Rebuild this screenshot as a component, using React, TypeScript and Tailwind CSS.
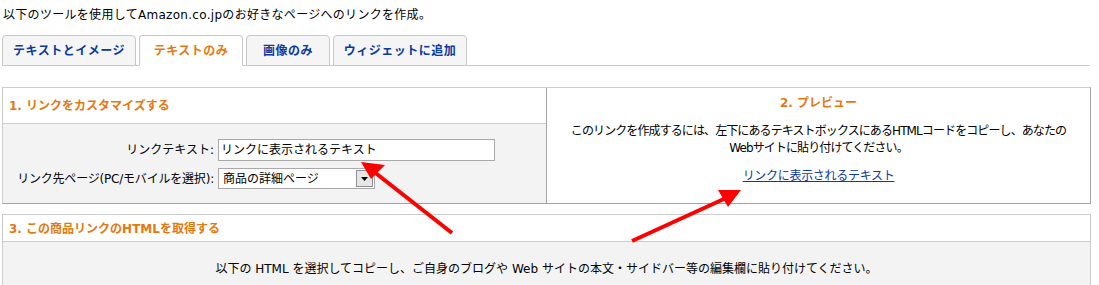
import React from 'react';

const font = { fontFamily: '"DejaVu Sans", "Noto Sans CJK JP", sans-serif' };

const tabs = [
    { label: 'テキストとイメージ', width: 'w-[134px]', active: false },
    { label: 'テキストのみ', width: 'w-[104px]', active: true },
    { label: '画像のみ', width: 'w-[84px]', active: false },
    { label: 'ウィジェットに追加', width: 'w-[134px]', active: false },
];

const App: React.FC = () => {
    return (
        <div className="relative w-[1099px] h-[285px] overflow-hidden bg-white text-[12px] text-black" style={font}>
            {/* Intro */}
            <p className="pl-[3px] pt-[8px] leading-[14px] tracking-[0.3px]">
                以下のツールを使用してAmazon.co.jpのお好きなページへのリンクを作成。
            </p>

            {/* Tabs */}
            <div className="ml-[2px] mt-[14px] w-[1088px] flex gap-[3px] border-b border-[#c8c8c8] h-[30px] items-end">
                {tabs.map((t) => (
                    <div
                        key={t.label}
                        className={`${t.width} h-[31px] -mb-px flex items-center justify-center rounded-t-[4px] border border-[#c8c8c8] font-bold tracking-[0.5px] ${
                            t.active ? 'bg-white text-[#e47911] border-b-white' : 'bg-[#f5f5f5] text-[#0c3a9c]'
                        }`}
                    >
                        {t.label}
                    </div>
                ))}
            </div>

            {/* Section 1 & 2 */}
            <div className="ml-[2px] mt-[21px] w-[1089px] h-[117px] flex border-t border-l border-[#cccccc] border-b border-r border-b-[#a3a3a3] border-r-[#a3a3a3]">
                <div className="w-[544px] flex flex-col border-r border-[#a3a3a3]">
                    <div className="h-[36px] flex items-center pl-[6px] font-bold text-[#e47911] border-b border-[#cccccc]">
                        1. リンクをカスタマイズする
                    </div>
                    <div className="flex-1 bg-[#f3f3f3] pt-[15px]">
                        <div className="flex items-center h-[22px]">
                            <span className="w-[215px] text-right pr-[4px]">リンクテキスト:</span>
                            <div className="w-[277px] h-[22px] bg-white border border-[#a9a9a9] flex items-center pl-[2px]">
                                リンクに表示されるテキスト
                            </div>
                        </div>
                        <div className="flex items-center h-[21px] mt-[7px]">
                            <span className="w-[215px] text-right pr-[4px] whitespace-nowrap tracking-[-0.2px]">
                                リンク先ページ(PC/モバイルを選択):
                            </span>
                            <div className="w-[157px] h-[21px] bg-white border border-[#a9a9a9] flex items-center justify-between pl-[4px]">
                                <span>商品の詳細ページ</span>
                                <span className="w-[17px] h-[17px] mr-px bg-[#e6e6e6] border border-[#8f8f8f] flex items-center justify-center">
                                    <svg width="7" height="4" viewBox="0 0 7 4">
                                        <path d="M0 0h7L3.5 4z" fill="#000" />
                                    </svg>
                                </span>
                            </div>
                        </div>
                    </div>
                </div>
                <div className="flex-1 flex flex-col items-center text-center">
                    <div className="h-[24px] flex items-end font-bold text-[#e47911]">2. プレビュー</div>
                    <p className="mt-[11px] leading-[17px] whitespace-nowrap tracking-[-0.9px]">
                        このリンクを作成するには、左下にあるテキストボックスにあるHTMLコードをコピーし、あなたの
                        <br />
                        Webサイトに貼り付けてください。
                    </p>
                    <a href="#" className="mt-[12px] text-[#0c3a9c] underline leading-[14px] tracking-[-0.3px]">
                        リンクに表示されるテキスト
                    </a>
                </div>
            </div>

            {/* Section 3 */}
            <div className="ml-[2px] mt-[10px] w-[1089px] border-t border-l border-r border-[#cccccc]">
                <div className="h-[27px] flex items-center pl-[6px] pt-[2px] font-bold text-[#e47911] border-b border-[#cccccc]">
                    3. この商品リンクのHTMLを取得する
                </div>
                <div className="bg-[#f3f3f3] h-[50px] pt-[18px] text-center">
                    以下の HTML を選択してコピーし、ご自身のブログや Web サイトの本文・サイドバー等の編集欄に貼り付けてください。
                </div>
            </div>

            {/* Annotation arrows */}
            <svg className="absolute inset-0 pointer-events-none" width="1099" height="285">
                <line x1="452" y1="233" x2="373" y2="171" stroke="#ff0000" strokeWidth="4" />
                <polygon points="361,162 385,165 371,179" fill="#ff0000" />
                <line x1="632" y1="241" x2="726" y2="198" stroke="#ff0000" strokeWidth="4" />
                <polygon points="741,190 728,207 718,190" fill="#ff0000" />
            </svg>
        </div>
    );
};

export default App;
